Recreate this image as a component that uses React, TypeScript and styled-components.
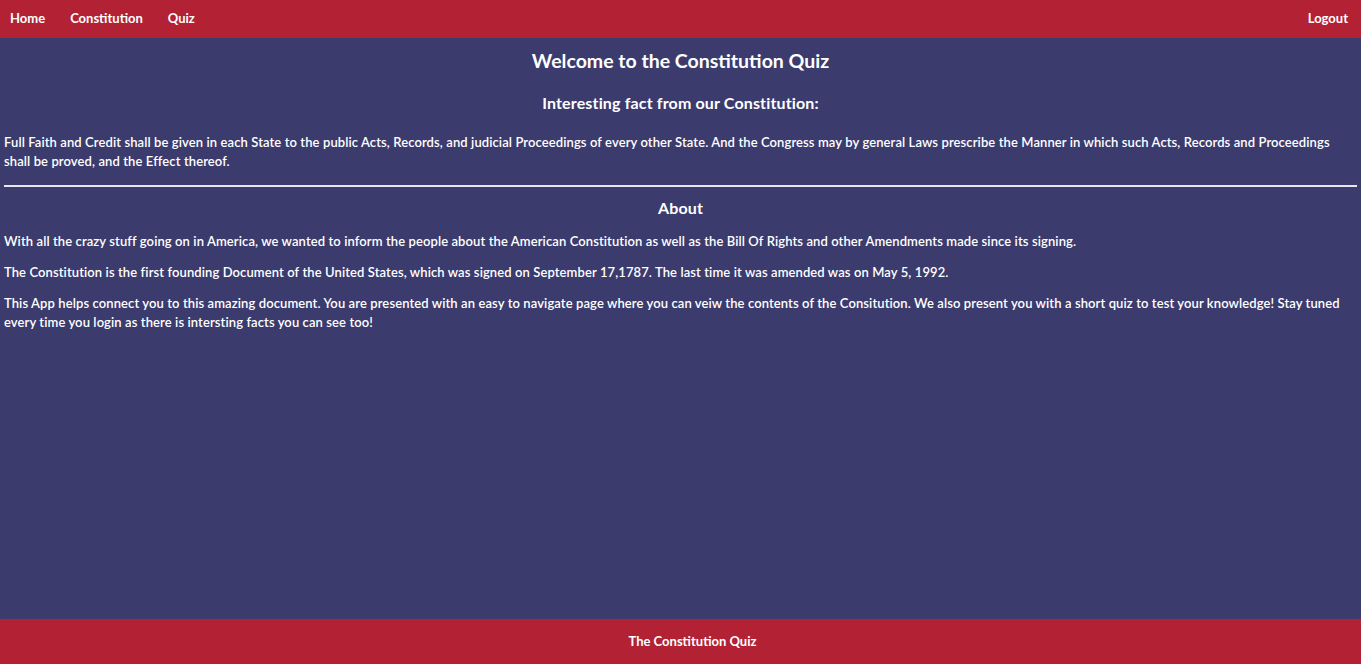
import React from "react";
import styled, { createGlobalStyle } from "styled-components";

const Global = createGlobalStyle`
  html, body { margin: 0; padding: 0; }
  body {
    font-family: "Lato", "Noto Sans", sans-serif;
    background: #3c3b6e;
    color: #ffffff;
  }
`;

const Page = styled.div`
  display: flex;
  flex-direction: column;
  min-height: 100vh;
`;

const NavBar = styled.nav`
  display: flex;
  align-items: center;
  justify-content: space-between;
  height: 38px;
  background: #b22234;
  padding: 0 13px 2px 10px;
  box-sizing: border-box;
`;

const NavGroup = styled.div`
  display: flex;
  gap: 25px;
`;

const NavLink = styled.a`
  color: #ffffff;
  text-decoration: none;
  font-size: 13px;
  font-weight: 700;
`;

const Main = styled.main`
  flex: 1;
  padding: 0 4px 20px;
`;

const Title = styled.h1`
  text-align: center;
  font-size: 19.5px;
  line-height: 24px;
  font-weight: 700;
  margin: 11px 0 20px;
`;

const SubTitle = styled.h3`
  text-align: center;
  font-size: 16px;
  line-height: 20px;
  font-weight: 700;
  letter-spacing: 0.15px;
  margin: 0 0 20px;
`;

const Para = styled.p<{ $flush?: boolean }>`
  font-size: 13px;
  line-height: 19px;
  font-weight: 600;
  letter-spacing: 0.1px;
  margin: ${(p) => (p.$flush ? "1px 0 0" : "0 0 12px")};
`;

const Rule = styled.hr`
  border: 0;
  border-top: 2px solid #e6e6ee;
  margin: 14px 0 11px;
`;

const AboutTitle = styled(SubTitle)`
  margin-bottom: 14px;
`;

const Footer = styled.footer`
  display: flex;
  align-items: center;
  justify-content: center;
  height: 45px;
  padding: 0 0 2px 24px;
  box-sizing: border-box;
  background: #b22234;
  font-size: 13px;
  font-weight: 700;
`;

export default function App() {
  return (
    <Page>
      <Global />
      <NavBar>
        <NavGroup>
          <NavLink href="#">Home</NavLink>
          <NavLink href="#">Constitution</NavLink>
          <NavLink href="#">Quiz</NavLink>
        </NavGroup>
        <NavLink href="#">Logout</NavLink>
      </NavBar>
      <Main>
        <Title>Welcome to the Constitution Quiz</Title>
        <SubTitle>Interesting fact from our Constitution:</SubTitle>
        <Para $flush>
          Full Faith and Credit shall be given in each State to the public Acts, Records, and judicial Proceedings of every other State. And the Congress may by general Laws prescribe the Manner in which such Acts, Records and Proceedings shall be proved, and the Effect thereof.
        </Para>
        <Rule />
        <AboutTitle>About</AboutTitle>
        <Para>
          With all the crazy stuff going on in America, we wanted to inform the people about the American Constitution as well as the Bill Of Rights and other Amendments made since its signing.
        </Para>
        <Para>
          The Constitution is the first founding Document of the United States, which was signed on September 17,1787. The last time it was amended was on May 5, 1992.
        </Para>
        <Para>
          This App helps connect you to this amazing document. You are presented with an easy to navigate page where you can veiw the contents of the Consitution. We also present you with a short quiz to test your knowledge! Stay tuned every time you login as there is intersting facts you can see too!
        </Para>
      </Main>
      <Footer>The Constitution Quiz</Footer>
    </Page>
  );
}
